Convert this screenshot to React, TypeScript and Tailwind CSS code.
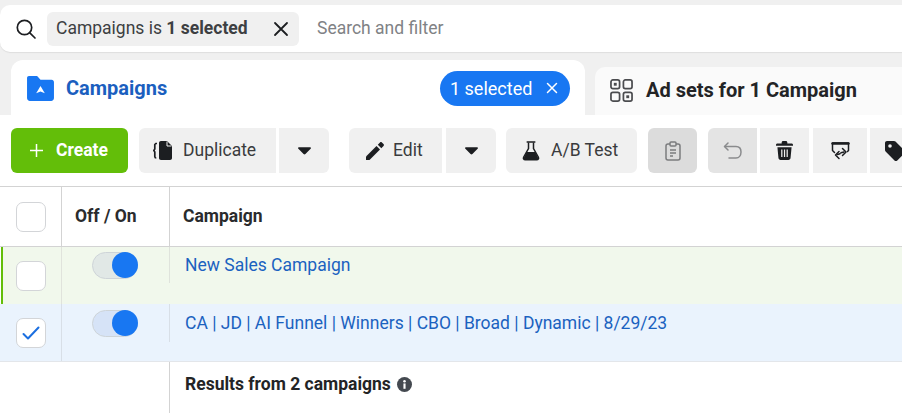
import { ReactNode } from "react";

const font = "font-['Roboto',sans-serif]";

function SearchIcon() {
    return (
        <svg width="22" height="22" viewBox="0 0 22 22" fill="none" stroke="#1c1e21" strokeWidth="1.7">
            <circle cx="9.5" cy="9.5" r="7.2" />
            <path d="M14.8 14.8 20 20" strokeLinecap="round" />
        </svg>
    );
}

function CloseIcon({ size, color, width }: { size: number; color: string; width: number }) {
    return (
        <svg width={size} height={size} viewBox="0 0 16 16" fill="none" stroke={color} strokeWidth={width} strokeLinecap="round">
            <path d="M2 2 14 14M14 2 2 14" />
        </svg>
    );
}

function FolderIcon() {
    return (
        <svg width="27" height="25" viewBox="0 0 28 26">
            <path d="M2 0h7.5c1 0 1.6.5 2.2 1.2L14 4h11.5C27 4 28 5 28 6.5V23c0 1.7-1.2 3-3 3H3c-1.7 0-3-1.3-3-3V2C0 .8.8 0 2 0z" fill="#1877f2" />
            <path d="M14 10.5 18.5 18 14 16.2 9.5 18z" fill="#fff" />
        </svg>
    );
}

function AdSetsIcon() {
    return (
        <svg width="23" height="23" viewBox="0 0 24 24" fill="none" stroke="#4b4c4f" strokeWidth="1.8">
            <rect x="1" y="1" width="9" height="9" rx="2" />
            <rect x="14" y="1" width="9" height="9" rx="2" />
            <rect x="1" y="14" width="9" height="9" rx="2" />
            <rect x="14" y="14" width="9" height="9" rx="2" />
            <rect x="4" y="4" width="3" height="3" fill="#4b4c4f" stroke="none" />
            <rect x="17" y="17" width="3" height="3" fill="#4b4c4f" stroke="none" />
        </svg>
    );
}

function Caret() {
    return (
        <svg width="13" height="8" viewBox="0 0 14 8">
            <path d="M1.2 0h11.6c1 0 1.5 1 .8 1.7L8 7.3c-.6.6-1.4.6-2 0L.4 1.7C-.3 1 .2 0 1.2 0z" fill="#1c1e21" />
        </svg>
    );
}

function DuplicateIcon() {
    return (
        <svg width="21" height="21" viewBox="0 0 21 21">
            <path d="M8 1h6l5 5v12c0 1-.8 2-2 2H8c-1.2 0-2-1-2-2V3c0-1.2.8-2 2-2z" fill="#1c1e21" />
            <path d="M14 1.5V6h4.5" fill="none" stroke="#f0f0f0" strokeWidth="1" />
            <path d="M4 3.5H2.8L1.8 4.500V9L.8 10.500l1 1.500v4.500c0 1 .6 1.500 1.500 1.500" fill="none" stroke="#1c1e21" strokeWidth="1.7" />
        </svg>
    );
}

function PencilIcon() {
    return (
        <svg width="20" height="20" viewBox="0 0 20 20" fill="#1c1e21">
            <path d="M1 15.5V19h3.5L15 8.500 11.500 5z" />
            <path d="M12.8 3.700 16.300 7.200l2.200-2.200c.6-.6.6-1.300 0-1.900l-1.600-1.600c-.6-.6-1.300-.6-1.900 0z" />
        </svg>
    );
}

function FlaskIcon() {
    return (
        <svg width="18" height="20" viewBox="0 0 18 20">
            <path d="M6.5 1.500v6L1.700 16c-.8 1.400 0 2.800 1.600 2.800h11.400c1.600 0 2.400-1.400 1.600-2.800l-4.800-8.500v-6" fill="none" stroke="#1c1e21" strokeWidth="1.5" />
            <path d="M5.2 1h7.6" stroke="#1c1e21" strokeWidth="1.5" strokeLinecap="round" />
            <path d="M4.6 11h8.8l2.500 5.200c.6 1.300-.2 2.300-1.400 2.300H3.500c-1.200 0-2-1-1.400-2.300z" fill="#1c1e21" />
        </svg>
    );
}

function ClipboardIcon() {
    return (
        <svg width="16" height="20" viewBox="0 0 16 20" fill="none" stroke="#7b7c7e" strokeWidth="1.5">
            <rect x="1" y="3" width="14" height="16" rx="2" />
            <rect x="5" y="1" width="6" height="4" rx="1" fill="#dcdcdc" />
            <path d="M5 9h6M5 12h6M5 15h3" strokeWidth="1.3" />
        </svg>
    );
}

function UndoIcon() {
    return (
        <svg width="20" height="18" viewBox="0 0 20 18" fill="none" stroke="#8a8b8d" strokeWidth="1.5" strokeLinecap="round" strokeLinejoin="round">
            <path d="M5 1 1.500 4.500 5 8" />
            <path d="M2 4.500h11c3 0 5 2.200 5 5.500s-2 6-5 6H6" />
        </svg>
    );
}

function TrashIcon() {
    return (
        <svg width="17" height="19" viewBox="0 0 18 20" fill="#1c1e21">
            <path d="M6 1.500C6 .7 6.700 0 7.500 0h3c.8 0 1.500.7 1.500 1.500V2.500h4.500c.8 0 1.500.6 1.500 1.500v1H0V4c0-.9.7-1.500 1.500-1.500H6z" />
            <path d="M1.5 6.500h15L15.400 18c-.1 1.200-1 2-2.200 2H4.800c-1.200 0-2.100-.8-2.200-2zM5.500 9v8h1.300V9zM8.400 9v8h1.300V9zM11.200 9v8h1.300V9z" fillRule="evenodd" />
        </svg>
    );
}

function SwapIcon() {
    return (
        <svg width="19" height="19" viewBox="0 0 19 19" fill="none" stroke="#1c1e21" strokeWidth="1.5" strokeLinecap="round" strokeLinejoin="round">
            <path d="M3.500 11.500 1.500 9.500V2h16v7.500l-1 1" />
            <path d="M1.500 2.500h16" strokeWidth="2.400" />
            <path d="M11.500 7.500 15 11l-3.500 3.500" />
            <path d="M8 10.500 4.500 14 8 17.500" />
            <path d="M6.500 13.500 9 12.800M10 11.800l3-.8" />
        </svg>
    );
}

function TagIcon() {
    return (
        <svg width="20" height="20" viewBox="0 0 20 20">
            <path d="M2 0h7c.6 0 1.100.2 1.500.6l8.900 8.900c.8.8.8 2 0 2.800l-7.100 7.100c-.8.8-2 .8-2.800 0L.6 10.500C.2 10.100 0 9.600 0 9V2C0 .9.900 0 2 0z" fill="#1c1e21" />
            <circle cx="5" cy="5" r="1.800" fill="#f0f0f0" />
        </svg>
    );
}

function InfoIcon() {
    return (
        <svg width="15" height="15" viewBox="0 0 14 14">
            <circle cx="7" cy="7" r="7" fill="#444950" />
            <rect x="6" y="6" width="2" height="5" fill="#fff" />
            <circle cx="7" cy="3.900" r="1.200" fill="#fff" />
        </svg>
    );
}

function ToolButton({ children, className }: { children: ReactNode; className: string }) {
    return <div className={`flex h-[45px] shrink-0 items-center bg-[#f0f0f0] text-[#3a3b3d] ${className}`}>{children}</div>;
}

function Toggle({ track }: { track: string }) {
    return (
        <div className={`relative h-[27px] w-[46px] rounded-full border border-[#ced4d8] ${track}`}>
            <div className="absolute right-[-1px] top-[-1px] h-[26px] w-[26px] rounded-full bg-[#1877f2]" />
        </div>
    );
}

export default function App() {
    return (
        <div className={`${font} flex h-[413px] w-[902px] flex-col overflow-hidden bg-white`}>
            <div className="bg-[#f0f0f0] pb-[9px] pt-[5px]">
                <div className="flex h-[47px] items-center rounded-l-[10px] bg-white pl-[15px] shadow-[0_1px_1px_#dedede]">
                    <SearchIcon />
                    <div className="ml-[10px] flex h-[34px] w-[252px] items-center rounded-[6px] bg-[#f0f0f0] pl-[9px] text-[17.5px] text-[#3d3f42]">
                        <span>Campaigns is <span className="font-bold">1 selected</span></span>
                        <span className="ml-auto mr-[10px]"><CloseIcon size={16} color="#1c1e21" width={1.8} /></span>
                    </div>
                    <span className="ml-[18px] text-[17.5px] text-[#808285]">Search and filter</span>
                </div>
            </div>
            <div className="flex h-[54px] items-start bg-[#f0f0f0] pl-[11px]">
                <div className="mt-[-1px] flex h-[55px] w-[574px] items-center rounded-t-[12px] bg-white pl-[16px] pr-[15px] pt-[1px]">
                    <FolderIcon />
                    <span className="ml-[12px] text-[20px] font-bold text-[#1b5fbf]">Campaigns</span>
                    <div className="ml-auto flex h-[35px] w-[130px] items-center rounded-full bg-[#1877f2] pl-[10px] text-[18px] text-white">
                        <span>1 selected</span>
                        <span className="ml-auto mr-[12px]"><CloseIcon size={12} color="#ffffff" width={2} /></span>
                    </div>
                </div>
                <div className="ml-[10px] mt-[6px] flex h-[48px] flex-1 items-center rounded-tl-[10px] bg-[#fafafa] pb-[2px] pl-[15px]">
                    <AdSetsIcon />
                    <span className="ml-[13px] text-[20px] font-bold text-[#232426]">Ad sets for 1 Campaign</span>
                </div>
            </div>
            <div className="flex h-[71px] shrink-0 items-center overflow-hidden pl-[11px]">
                <div className="flex h-[45px] w-[117px] shrink-0 items-center gap-[12px] rounded-[6px] bg-[#63be09] pl-[18px] text-[17.5px] font-bold text-white">
                    <svg width="15" height="15" viewBox="0 0 15 15" stroke="#fff" strokeWidth="1.5"><path d="M7.5 1v13M1 7.5h13" /></svg>
                    <span>Create</span>
                </div>
                <ToolButton className="ml-[11px] w-[137px] gap-[9px] rounded-l-[6px] pl-[14px] text-[17.5px]"><DuplicateIcon /><span>Duplicate</span></ToolButton>
                <ToolButton className="ml-[3px] w-[50px] justify-center rounded-r-[6px]"><Caret /></ToolButton>
                <ToolButton className="ml-[20px] w-[93px] gap-[8px] rounded-l-[6px] pl-[16px] text-[17.5px]"><PencilIcon /><span>Edit</span></ToolButton>
                <ToolButton className="ml-[4px] w-[50px] justify-center rounded-r-[6px]"><Caret /></ToolButton>
                <ToolButton className="ml-[10px] w-[131px] gap-[11px] rounded-[6px] pl-[16px] text-[17.5px]"><FlaskIcon /><span>A/B Test</span></ToolButton>
                <ToolButton className="ml-[11px] w-[49px] justify-center rounded-[6px] !bg-[#dcdcdc]"><ClipboardIcon /></ToolButton>
                <ToolButton className="ml-[11px] w-[49px] justify-center rounded-l-[6px] !bg-[#e4e4e4]"><UndoIcon /></ToolButton>
                <ToolButton className="ml-[3px] w-[49px] justify-center"><TrashIcon /></ToolButton>
                <ToolButton className="ml-[4px] w-[54px] justify-center"><SwapIcon /></ToolButton>
                <ToolButton className="ml-[3px] w-[60px] pl-[15px]"><TagIcon /></ToolButton>
            </div>
            <div className="flex h-[61px] shrink-0 border-y border-[#d3d3d3] text-[17.5px] font-bold text-[#2a2b2d]">
                <div className="flex w-[62px] items-center justify-center border-r border-[#d3d3d3]">
                    <div className="h-[30px] w-[30px] rounded-[7px] border border-[#d3d5d8] bg-white" />
                </div>
                <div className="flex w-[108px] items-center border-r border-[#d3d3d3] pl-[13px]">Off / On</div>
                <div className="flex items-center pl-[13px]">Campaign</div>
            </div>
            <div className="ml-[1px] flex h-[57px] shrink-0 border-l-[2px] border-[#63be09] bg-[#f1f8ec]">
                <div className="flex w-[59px] items-center justify-center border-r border-[#e0e3dc] pr-[2px]">
                    <div className="h-[30px] w-[30px] rounded-[7px] border border-[#d3d5d8] bg-white" />
                </div>
                <div className="w-[107px] pl-[30px] pt-[5px]">
                    <Toggle track="bg-[#e1e8e6]" />
                </div>
                <div className="h-[36px] border-l border-[#dfe3dc]" />
                <div className="pl-[15px] pt-[5px] text-[17.5px] text-[#1b62c0]">New Sales Campaign</div>
            </div>
            <div className="flex h-[58px] shrink-0 border-b border-[#e3e6ea] bg-[#eaf3fd] pl-[3px]">
                <div className="flex w-[59px] items-center justify-center border-r border-[#d8dfe7] pr-[2px]">
                    <div className="flex h-[30px] w-[30px] items-center justify-center rounded-[7px] border border-[#d3d5d8] bg-white">
                        <svg width="18" height="14" viewBox="0 0 18 14" fill="none" stroke="#1b6fe0" strokeWidth="2" strokeLinecap="round" strokeLinejoin="round"><path d="M1.5 8 6 12.5 16.5 1.5" /></svg>
                    </div>
                </div>
                <div className="w-[107px] pl-[30px] pt-[6px]">
                    <Toggle track="bg-[#d6e3f7]" />
                </div>
                <div className="h-[38px] border-l border-[#d8dfe7]" />
                <div className="pl-[15px] pt-[6px] text-[17.5px] text-[#1b62c0]">CA | JD | AI Funnel | Winners | CBO | Broad | Dynamic | 8/29/23</div>
            </div>
            <div className="flex flex-1">
                <div className="w-[170px] border-r border-[#d3d3d3]" />
                <div className="flex h-[44px] items-center gap-[6px] pl-[15px] text-[17.5px] font-bold text-[#232426]">
                    <span>Results from 2 campaigns</span>
                    <InfoIcon />
                </div>
            </div>
        </div>
    );
}
